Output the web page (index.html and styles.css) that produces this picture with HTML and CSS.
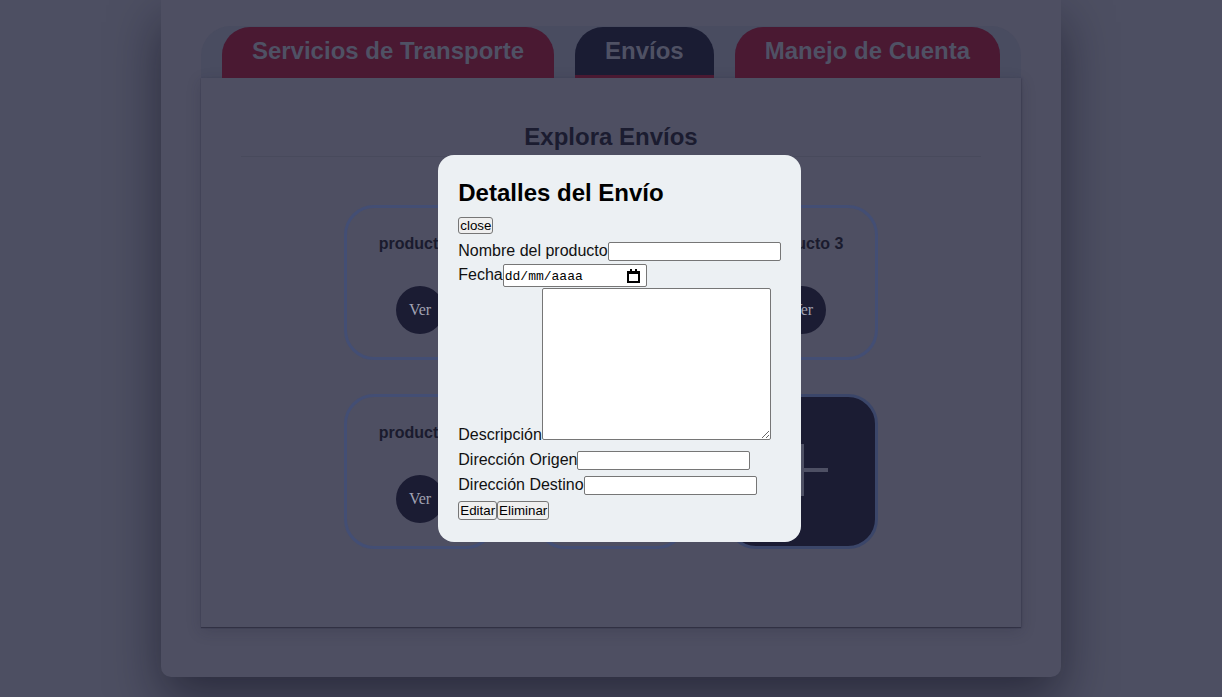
FILE: index.html
```html
<!DOCTYPE html>
<html lang="es">
<head>
<meta charset="utf-8">
<title>Envíos</title>
<link rel="stylesheet" href="styles.css">
</head>
<body>
<div class="page">
  <nav class="tabs">
    <div class="tab">Servicios de Transporte</div>
    <div class="tab tab-active">Envíos</div>
    <div class="tab">Manejo de Cuenta</div>
  </nav>
  <section class="panel">
    <h2 class="panel-title">Explora Envíos</h2>
    <div class="grid">
      <div class="card"><div class="card-name">producto 1</div><button class="ver">Ver</button></div>
      <div class="card"><div class="card-name">producto 2</div><button class="ver">Ver</button></div>
      <div class="card"><div class="card-name">producto 3</div><button class="ver">Ver</button></div>
      <div class="card"><div class="card-name">producto 4</div><button class="ver">Ver</button></div>
      <div class="card"><div class="card-name">producto 5</div><button class="ver">Ver</button></div>
      <div class="card card-add"><span class="plus"></span></div>
    </div>
  </section>
</div>

<div class="overlay">
  <div class="modal">
    <h2 class="modal-title">Detalles del Envío</h2>
    <div class="row row-close"><button class="btn">close</button></div>
    <div class="row row-name"><label>Nombre del producto</label><input class="inp" type="text"></div>
    <div class="row row-date"><label>Fecha</label><span class="date"><span class="date-text">dd/mm/aaaa</span><svg class="cal" width="13" height="14" viewBox="0 0 13 14"><rect x="1" y="3" width="11" height="10" fill="none" stroke="#000" stroke-width="2"/><rect x="1" y="2" width="11" height="3" fill="#000"/><rect x="3" y="0" width="2" height="3" fill="#000"/><rect x="8" y="0" width="2" height="3" fill="#000"/></svg></span></div>
    <div class="row row-area"><label>Descripción</label><textarea class="area"></textarea></div>
    <div class="row row-origin"><label>Dirección Origen</label><input class="inp" type="text"></div>
    <div class="row"><label>Dirección Destino</label><input class="inp" type="text"></div>
    <div class="row"><button class="btn btn-tall">Editar</button><button class="btn btn-tall">Eliminar</button></div>
  </div>
</div>
</body>
</html>
```
FILE: styles.css
```css
html, body {
  margin: 0;
  padding: 0;
}
body {
  background: #4d4f62;
  font-family: "Liberation Serif", "Times New Roman", serif;
  height: 697px;
  overflow: hidden;
}
.page {
  width: 900px;
  margin: 0 auto;
  box-sizing: border-box;
  padding: 26px 40px 50px;
  background: #4e4f62;
  border-radius: 0 0 10px 10px;
  box-shadow: 0 22px 50px rgba(10, 10, 25, 0.5);
}
.tabs {
  display: flex;
  justify-content: center;
  gap: 21px;
  padding-top: 1px;
  background: #494c60;
  border-radius: 30px 30px 0 0;
}
.tab {
  font-family: "Liberation Sans", Arial, sans-serif;
  font-weight: bold;
  font-size: 24px;
  line-height: 28px;
  color: #4f5164;
  padding: 10px 30px;
  background: #4a1932;
  border-bottom: 3px solid #4a1932;
  border-radius: 28px 28px 0 0;
}
.tab-active {
  background: #1a1c33;
}
.panel {
  background: #4e4f62;
  padding: 45px 40px 78px;
  box-shadow: 0 1px 1px rgba(30, 30, 48, 0.5), 1px 0 2px rgba(30, 30, 48, 0.15), 0 4px 14px rgba(30, 30, 48, 0.2);
}
.panel-title {
  margin: 0;
  font-family: "Liberation Sans", Arial, sans-serif;
  font-size: 24px;
  font-weight: bold;
  color: #1b1c30;
  text-align: center;
  padding-bottom: 5px;
  border-bottom: 1px solid #484a5c;
}
.grid {
  margin-top: 48px;
  display: grid;
  grid-template-columns: repeat(3, 152px);
  grid-auto-rows: 155px;
  justify-content: center;
  column-gap: 39px;
  row-gap: 34px;
}
.card {
  box-sizing: border-box;
  border: 3px solid #434e74;
  border-radius: 30px;
  display: flex;
  flex-direction: column;
  align-items: center;
  padding-top: 27px;
}
.card-name {
  font-family: "Liberation Sans", Arial, sans-serif;
  font-weight: bold;
  font-size: 16px;
  color: #1a1b2e;
}
.ver {
  margin-top: 33px;
  width: 48px;
  height: 48px;
  border: none;
  border-radius: 50%;
  background: #1b1c33;
  color: #a0a1b1;
  font-family: "Liberation Serif", "Times New Roman", serif;
  font-size: 16px;
  padding: 0;
}
.card-add {
  background: #1b1c33;
  border-color: #3b4669;
  justify-content: center;
  padding-top: 0;
}
.plus {
  position: relative;
  width: 52px;
  height: 52px;
  margin-top: -3px;
}
.plus::before, .plus::after {
  content: "";
  position: absolute;
  background: #4e5064;
}
.plus::before {
  left: 24px;
  top: 0;
  width: 4px;
  height: 52px;
}
.plus::after {
  top: 24px;
  left: 0;
  width: 52px;
  height: 4px;
}

.overlay {
  position: fixed;
  inset: 0;
  display: flex;
  align-items: center;
  justify-content: center;
  padding-left: 17px;
}
.modal {
  background: #ecf0f3;
  border-radius: 16px;
  padding: 24px 20px 22px;
  font-family: "Liberation Sans", Arial, sans-serif;
  font-size: 16px;
  color: #111;
}
.modal-title {
  margin: 0;
  font-size: 24px;
  font-weight: bold;
  color: #000;
}
.row {
  margin-top: 6px;
  white-space: nowrap;
}
.row-close {
  margin-top: 9px;
}
.row-name {
  margin-top: 8px;
}
.row-date {
  margin-top: 3px;
}
.row-area {
  margin-top: 1px;
}
.row-origin {
  margin-top: 7px;
}
.btn {
  font-family: "Liberation Sans", Arial, sans-serif;
  font-size: 13.33px;
  height: 17px;
  padding: 0 1px;
  margin: 0;
  border: 1px solid #767676;
  border-radius: 3px;
  background: #efefef;
  color: #000;
  box-sizing: border-box;
  vertical-align: baseline;
}
.btn-tall {
  height: 19px;
}
.inp {
  box-sizing: border-box;
  width: 173px;
  height: 19px;
  padding: 0 2px;
  margin: 0;
  border: 1px solid #767676;
  border-radius: 2px;
  background: #fff;
  font-family: "Liberation Sans", Arial, sans-serif;
  font-size: 13.33px;
  vertical-align: baseline;
}
.date {
  display: inline-flex;
  align-items: center;
  justify-content: space-between;
  box-sizing: border-box;
  width: 144px;
  height: 23px;
  padding: 1px 6px 0 1px;
  border: 1px solid #767676;
  border-radius: 2px;
  background: #fff;
  vertical-align: baseline;
}
.date-text {
  font-family: "Liberation Mono", "Courier New", monospace;
  font-size: 13px;
  color: #000;
}
.cal {
  display: block;
}
.area {
  box-sizing: border-box;
  width: 229px;
  height: 152px;
  margin: 0;
  border: 1px solid #767676;
  border-radius: 2px;
  background: #fff;
  padding: 2px;
  font-family: "Liberation Mono", monospace;
  font-size: 13.33px;
}
```
